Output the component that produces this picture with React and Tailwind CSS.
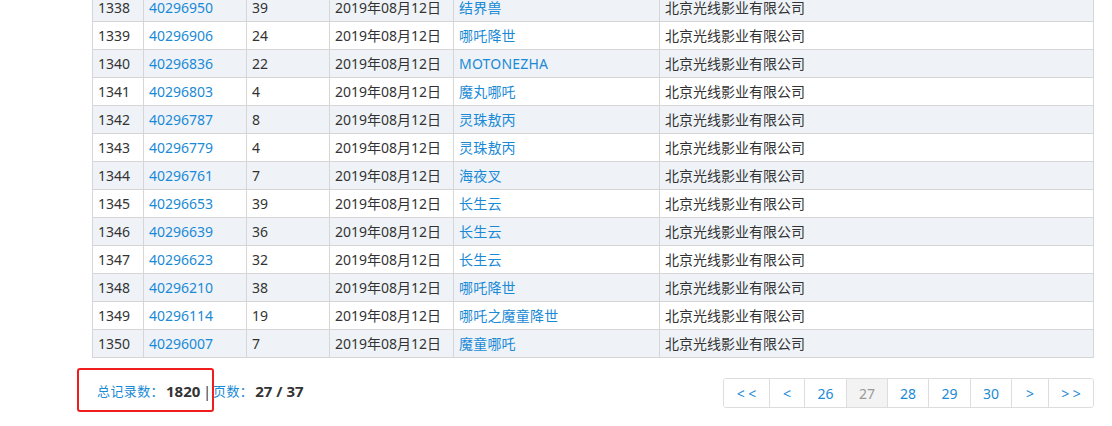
import React from "react";

const rows = [
  ["1338", "40296950", "39", "结界兽"],
  ["1339", "40296906", "24", "哪吒降世"],
  ["1340", "40296836", "22", "MOTONEZHA"],
  ["1341", "40296803", "4", "魔丸哪吒"],
  ["1342", "40296787", "8", "灵珠敖丙"],
  ["1343", "40296779", "4", "灵珠敖丙"],
  ["1344", "40296761", "7", "海夜叉"],
  ["1345", "40296653", "39", "长生云"],
  ["1346", "40296639", "36", "长生云"],
  ["1347", "40296623", "32", "长生云"],
  ["1348", "40296210", "38", "哪吒降世"],
  ["1349", "40296114", "19", "哪吒之魔童降世"],
  ["1350", "40296007", "7", "魔童哪吒"],
];

const pages = [
  { t: "< <", w: "w-[45px]" },
  { t: "<", w: "w-[35px]" },
  { t: "26", w: "w-[42px]" },
  { t: "27", w: "w-[41px]", active: true },
  { t: "28", w: "w-[41px]" },
  { t: "29", w: "w-[42px]" },
  { t: "30", w: "w-[41px]" },
  { t: ">", w: "w-[37px]" },
  { t: "> >", w: "w-[45px]" },
];

const cell = "h-full flex items-center pl-[5px] border-r border-[#d6d6d6] whitespace-nowrap";

export default function App() {
  return (
    <div
      className="relative w-[1112px] h-[426px] overflow-hidden bg-white text-[14px] text-[#333]"
      style={{ fontFamily: '"Noto Sans", "Noto Sans CJK SC", sans-serif' }}
    >
      <div className="ml-[92px] w-[1002px] mt-[-6px] border-l border-[#d6d6d6]">
        {rows.map((r, i) => (
          <div
            key={r[0]}
            className={`flex h-[28px] border-b border-[#d6d6d6] ${i % 2 === 0 ? "bg-[#eff3f8]" : "bg-white"}`}
          >
            <div className={`${cell} w-[51px]`}>{r[0]}</div>
            <div className={`${cell} w-[103px] text-[#1a8ad6]`}>{r[1]}</div>
            <div className={`${cell} w-[83px]`}>{r[2]}</div>
            <div className={`${cell} w-[124px]`}>2019年08月12日</div>
            <div className={`${cell} w-[206px] text-[#1a8ad6] tracking-[0.2px]`}>{r[3]}</div>
            <div className={`${cell} w-[434px]`}>北京光线影业有限公司</div>
          </div>
        ))}
      </div>

      <div className="ml-[92px] w-[1002px] mt-[20px] flex justify-between items-start">
        <div className="pl-[5px] pt-[2px] text-[13px] flex items-center whitespace-nowrap">
          <span className="text-[#1a8ad6] tracking-[0.4px]">总记录数：</span>
          <span className="font-bold text-[15px] text-[#333] ml-[2px]">1820</span>
          <span className="text-[#333] text-[14px] ml-[3px] mr-[2px]">|</span>
          <span className="text-[#1a8ad6] tracking-[0.4px]">页数：</span>
          <span className="font-bold text-[15px] text-[#333] ml-[2px]">27 / 37</span>
        </div>
        <div className="flex h-[30px] border border-[#dddddd] rounded-[3px] overflow-hidden">
          {pages.map((p, i) => (
            <div
              key={i}
              className={`${p.w} h-full flex items-center justify-center whitespace-nowrap text-[14px] ${i > 0 ? "border-l border-[#dddddd]" : ""} ${p.active ? "bg-[#f3f3f3] text-[#999]" : "bg-white text-[#1a8ad6]"}`}
            >
              {p.t}
            </div>
          ))}
        </div>
      </div>

      <div className="absolute left-[77px] top-[368px] w-[137px] h-[44px] border-2 border-[#f01d1d] rounded-[3px]" />
    </div>
  );
}
